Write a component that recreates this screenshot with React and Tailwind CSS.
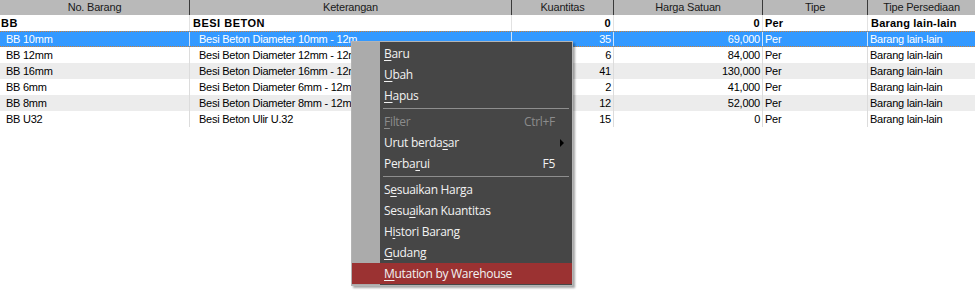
import React from "react";

const widths = [190, 322, 102, 149, 105, 107];
const aligns = ["left", "left", "right", "right", "left", "left"];

const headers = ["No. Barang", "Keterangan", "Kuantitas", "Harga Satuan", "Tipe", "Tipe Persediaan"];

const rows = [
  { c: ["BB 10mm", "Besi Beton Diameter 10mm - 12m", "35", "69,000", "Per", "Barang lain-lain"], sel: true },
  { c: ["BB 12mm", "Besi Beton Diameter 12mm - 12m", "6", "84,000", "Per", "Barang lain-lain"] },
  { c: ["BB 16mm", "Besi Beton Diameter 16mm - 12m", "41", "130,000", "Per", "Barang lain-lain"], alt: true },
  { c: ["BB 6mm", "Besi Beton Diameter 6mm - 12m", "2", "41,000", "Per", "Barang lain-lain"] },
  { c: ["BB 8mm", "Besi Beton Diameter 8mm - 12m", "12", "52,000", "Per", "Barang lain-lain"], alt: true },
  { c: ["BB U32", "Besi Beton Ulir U.32", "15", "0", "Per", "Barang lain-lain"] },
];

const menu = [
  { t: "Baru", u: 0 },
  { t: "Ubah", u: 0 },
  { t: "Hapus", u: 0 },
  { sep: true },
  { t: "Filter", u: 0, dis: true, k: "Ctrl+F" },
  { t: "Urut berdasar", u: 10, arrow: true },
  { t: "Perbarui", u: 5, k: "F5" },
  { sep: true },
  { t: "Sesuaikan Harga", u: 1 },
  { t: "Sesuaikan Kuantitas", u: 4 },
  { t: "Histori Barang", u: 1 },
  { t: "Gudang", u: 0 },
  { t: "Mutation by Warehouse", u: 0, hi: true },
];

function Label({ t, u }) {
  return (
    <span>
      {t.slice(0, u)}
      <span className="underline underline-offset-[2px]">{t[u]}</span>
      {t.slice(u + 1)}
    </span>
  );
}

export default function App() {
  return (
    <div
      className="relative w-[975px] h-[298px] bg-white overflow-hidden text-[11px] text-black"
      style={{ fontFamily: '"Liberation Sans", Arial, sans-serif' }}
    >
      {/* header */}
      <div className="flex h-[15px] bg-[#b9b9b9] text-[#1a1a1a]">
        {headers.map((h, i) => (
          <div
            key={i}
            className={`shrink-0 text-center leading-[15px] tracking-[-0.2px] ${i < 5 ? "border-r border-[#3a3a3a]" : ""}`}
            style={{ width: widths[i] }}
          >
            {h}
          </div>
        ))}
      </div>
      {/* group row */}
      <div className="flex h-[16px] bg-white font-bold tracking-[0.5px]">
        {["BB", "BESI BETON", "0", "0", "Per", "Barang lain-lain"].map((v, i) => (
          <div
            key={i}
            className={`shrink-0 leading-[16px] whitespace-nowrap overflow-hidden ${i < 5 ? "border-r border-[#e2e2e2]" : ""} ${
              aligns[i] === "right" ? "text-right pr-[2px]" : i === 0 ? "pl-[1px]" : i === 4 ? "pl-[2px]" : "pl-[3px]"
            } ${i >= 4 ? "tracking-[0.2px]" : ""}`}
            style={{ width: widths[i] }}
          >
            {v}
          </div>
        ))}
      </div>
      {rows.map((r, ri) => (
        <div
          key={ri}
          className={`flex h-[16px] tracking-[-0.25px] ${
            r.sel
              ? "bg-[#3399ff] text-white border-y border-dotted border-[#c8803a]"
              : r.alt
              ? "bg-[#ececec]"
              : "bg-white"
          }`}
        >
          {r.c.map((v, i) => (
            <div
              key={i}
              className={`shrink-0 whitespace-nowrap overflow-hidden ${r.sel ? "leading-[14px]" : "leading-[16px]"} ${
                i < 5 ? (r.sel ? "border-r border-[#cfe4fb]" : "border-r border-[#dcdcdc]") : ""
              } ${aligns[i] === "right" ? "text-right pr-[2px]" : i === 0 ? "pl-[6px]" : i === 1 ? "pl-[9px]" : "pl-[2px]"}`}
              style={{ width: widths[i] }}
            >
              {v}
            </div>
          ))}
        </div>
      ))}

      {/* context menu */}
      <div
        className="absolute left-[351px] top-[41px] w-[222px] border border-[#b4b4b4] shadow-[2px_2px_2px_rgba(0,0,0,0.35)] text-[12px] text-[#f2f2f2]"
        style={{ fontFamily: '"Open Sans", "Noto Sans", sans-serif' }}
      >
        <div className="py-[1px] bg-[linear-gradient(to_right,#ababab_28px,#464646_28px)]">
          {menu.map((m, i) =>
            m.sep ? (
              <div key={i} className="h-[5px] flex items-center pl-[31px] pr-[3px]">
                <div className="h-px w-full bg-[#8e8e8e]" />
              </div>
            ) : (
              <div
                key={i}
                className={`relative flex items-center h-[21px] pl-[32px] pr-[17px] tracking-[-0.3px] ${
                  m.hi ? "bg-[#9b3232]" : ""
                } ${m.dis ? "text-[#8c8c8c]" : ""}`}
              >
                <Label t={m.t} u={m.u} />
                <span className="ml-auto">{m.k || ""}</span>
                {m.arrow && (
                  <span className="absolute right-[8px] top-[7px] w-0 h-0 border-y-[4px] border-y-transparent border-l-[4px] border-l-black" />
                )}
              </div>
            )
          )}
        </div>
      </div>
    </div>
  );
}
